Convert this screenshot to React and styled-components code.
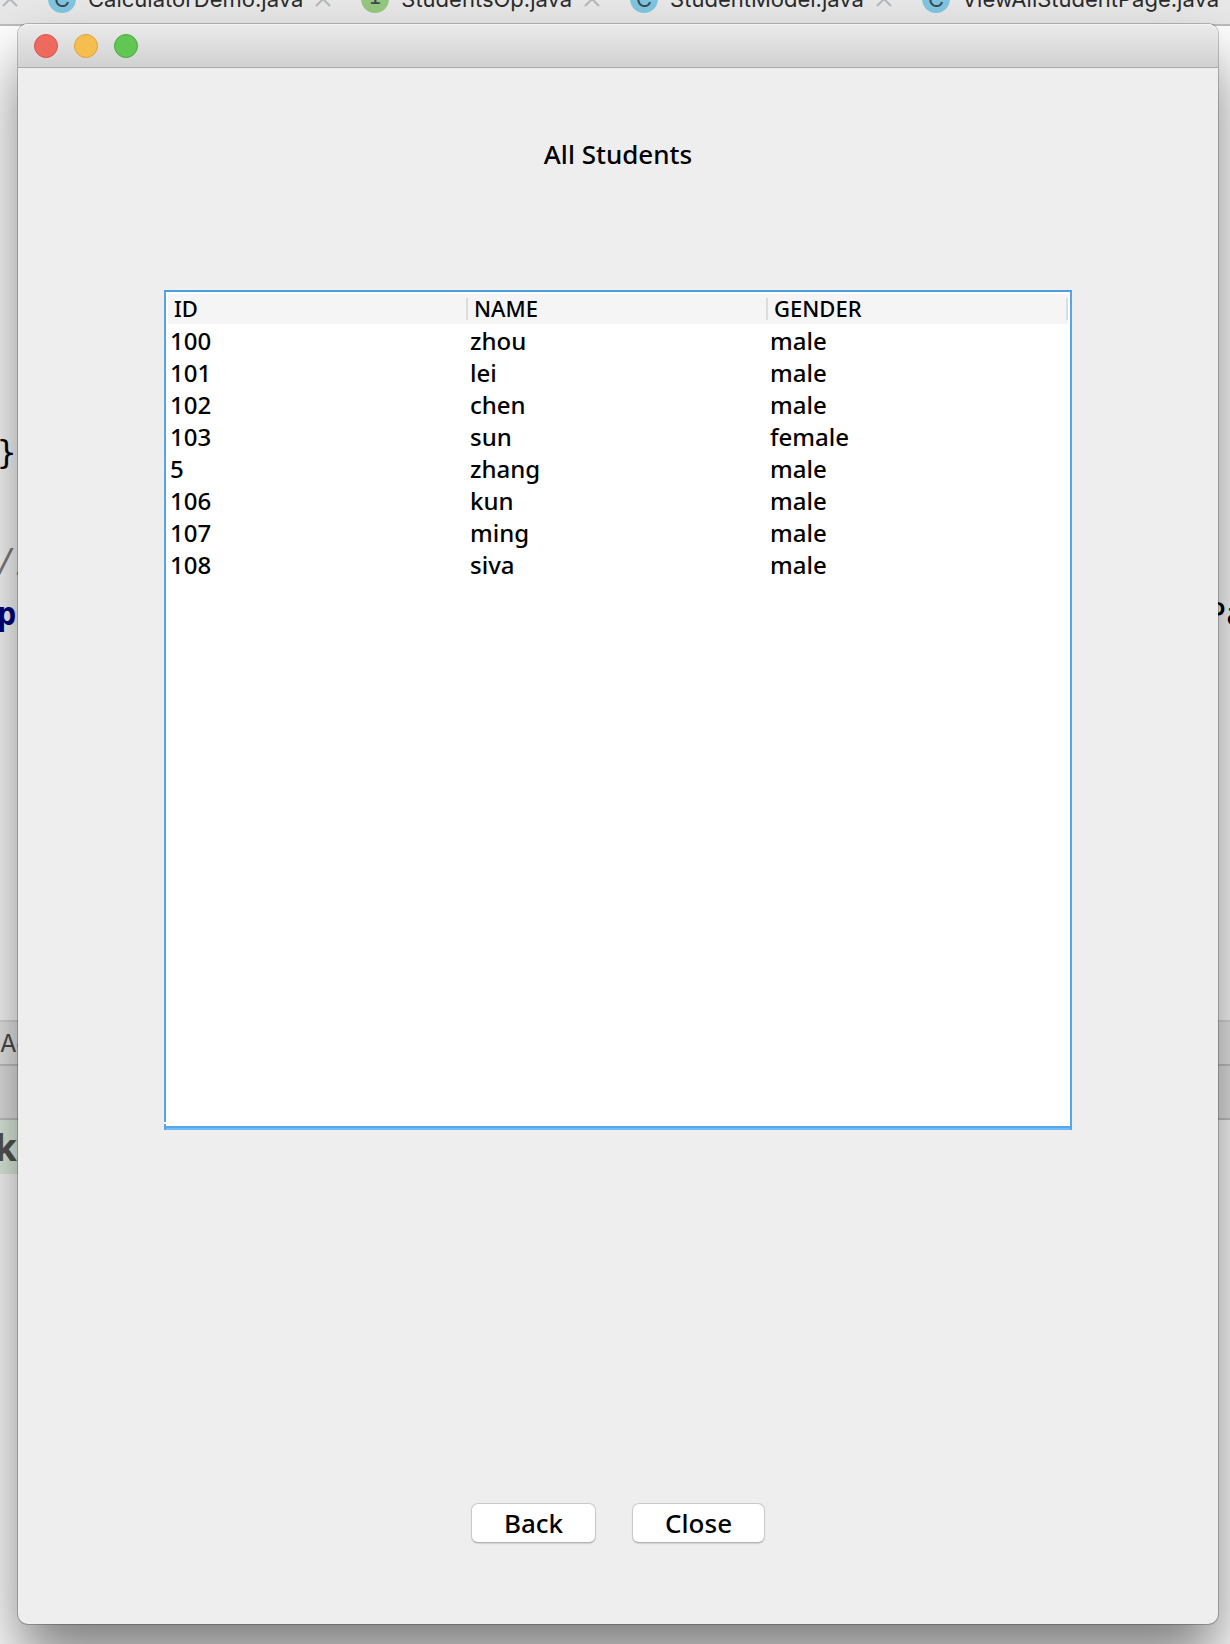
import React from "react";
import styled, { createGlobalStyle } from "styled-components";

const GlobalStyle = createGlobalStyle`
  *, *::before, *::after { box-sizing: border-box; }
  body { margin: 0; background: #fff; }
`;

const uiFont = `"Noto Sans", "Open Sans", sans-serif`;
const ideFont = `Inter, Roboto, sans-serif`;

const Desktop = styled.div`
  position: relative;
  min-height: 100vh;
  overflow: hidden;
  padding: 24px 12px 20px 18px;
  display: flex;
`;

/* The editor lies behind the dialog window. */
const Editor = styled.div`
  position: absolute;
  inset: 0;
  display: flex;
  flex-direction: column;
  overflow: hidden;
  font-family: ${ideFont};
`;

const TabBar = styled.nav`
  flex: none;
  height: 26px;
  display: flex;
  align-items: flex-end;
  overflow: hidden;
  padding: 0 0 11px 2px;
  background: #e8e8e8;
  border-bottom: 2px solid #bdbdbd;
`;

const Tab = styled.div`
  flex: none;
  display: flex;
  align-items: center;
  gap: 12px;
  height: 28px;
  margin-right: 30px;
`;

const FileBadge = styled.span`
  width: 28px;
  height: 28px;
  border-radius: 50%;
  background: ${(p) => (p.$kind === "I" ? "#95c880" : "#80c6e0")};
  color: #3c4a50;
  font: 22px/28px ${(p) => (p.$kind === "I" ? `"Liberation Mono", monospace` : ideFont)};
  text-align: center;
`;

const TabName = styled.span`
  font-size: 22px;
  line-height: 28px;
  color: #2b2b2b;
`;

const CloseMark = styled.svg`
  width: 16px;
  height: 16px;
`;

const Code = styled.div`
  flex: none;
  height: 994px;
  padding-top: 399px;
  font: 32px/54px "DejaVu Sans Mono", "Liberation Mono", monospace;
  color: #000;
`;

const CodeLine = styled.div`
  display: flex;
  justify-content: space-between;
  height: 54px;
  margin: 0 -15px 0 -3px;
`;

const Comment = styled.i`
  color: #808080;
`;

const Keyword = styled.b`
  color: #000080;
`;

const Strip = styled.div`
  flex: none;
  height: ${(p) => p.$height}px;
  background: ${(p) => p.$bg};
  border-top: 2px solid ${(p) => p.$line};
  font-size: 24px;
  line-height: 44px;
  color: #4c4c4c;
`;

const Console = styled.div`
  flex: none;
  height: 56px;
  margin-bottom: auto;
  border-top: 2px solid #c6c6c6;
  font-size: 38px;
  font-weight: 700;
  line-height: 54px;
  color: #555;
`;

const Highlight = styled.mark`
  display: inline-block;
  background: #e2f2e2;
  color: inherit;
  text-indent: -5px;
`;

const Window = styled.main`
  position: relative;
  flex: 1;
  display: flex;
  flex-direction: column;
  min-width: 0;
  border-radius: 10px;
  background: #eee;
  box-shadow: 0 0 0 1px rgba(0, 0, 0, 0.22), 0 36px 60px rgba(0, 0, 0, 0.5);
  font-family: ${uiFont};
  font-weight: 500;
  color: #000;
`;

const TitleBar = styled.header`
  flex: none;
  height: 44px;
  display: flex;
  align-items: center;
  gap: 16px;
  padding: 0 16px;
  border-radius: 10px 10px 0 0;
  border-bottom: 1px solid #ababab;
  background: linear-gradient(#ebebeb, #d1d1d1);
  box-shadow: inset 0 1px 0 #f6f6f6;
`;

const Light = styled.button`
  width: 24px;
  height: 24px;
  padding: 0;
  border: 1px solid ${(p) => p.$rim};
  border-radius: 50%;
  background: ${(p) => p.$fill};
`;

const Title = styled.h1`
  margin: 68px 0 118px;
  font-size: 26px;
  font-weight: inherit;
  line-height: 36px;
  text-align: center;
`;

const TablePane = styled.section`
  position: relative;
  min-height: 840px;
  margin: 0 146px;
  padding: 2px;
  border: 2px solid #57a6e8;
  border-top-color: #4b9ddf;
  border-bottom: 0;
  background: #fff;
  box-shadow: inset 0 -2px 0 #6cbbfd, inset 0 -4px 0 #57a6e8;

  /* Break in the focus ring above the bottom left corner. */
  &::after {
    content: "";
    position: absolute;
    left: -2px;
    bottom: 6px;
    width: 2px;
    height: 2px;
    background: #fff;
  }
`;

const Table = styled.table`
  width: 100%;
  table-layout: fixed;
  border-collapse: collapse;
`;

const HeadCell = styled.th`
  height: 30px;
  padding: 4px 0;
  background: #f5f5f5;
  font-weight: inherit;
  text-align: left;
  vertical-align: top;
`;

const HeadLabel = styled.span`
  display: block;
  height: 22px;
  padding-left: 6px;
  border-right: 2px solid #dcdcdc;
  font-size: 22px;
  line-height: 20px;
`;

const Cell = styled.td`
  height: 32px;
  padding: 2px 0 0 2px;
  font-size: 24px;
  line-height: 30px;
`;

const Actions = styled.footer`
  display: flex;
  justify-content: center;
  gap: 36px;
  margin: auto 0 81px;
`;

const Button = styled.button`
  height: 40px;
  padding: 0 32px;
  border: 1px solid #c9c9c9;
  border-bottom-color: #b2b2b2;
  border-radius: 7px;
  background: #fff;
  box-shadow: 0 1px 1px rgba(0, 0, 0, 0.12);
  font: 500 26px/36px ${uiFont};
  color: #000;
`;

const files = [
  { kind: "C", name: "CalculatorDemo.java" },
  { kind: "I", name: "StudentsOp.java" },
  { kind: "C", name: "StudentModel.java" },
  { kind: "C", name: "ViewAllStudentPage.java" },
];

const columns = ["ID", "NAME", "GENDER"];

const students = [
  ["100", "zhou", "male"],
  ["101", "lei", "male"],
  ["102", "chen", "male"],
  ["103", "sun", "female"],
  ["5", "zhang", "male"],
  ["106", "kun", "male"],
  ["107", "ming", "male"],
  ["108", "siva", "male"],
];

const lights = [
  { label: "Close window", fill: "#ee6a5f", rim: "#d9534b" },
  { label: "Minimize window", fill: "#f6be4f", rim: "#dfa33b" },
  { label: "Zoom window", fill: "#62c655", rim: "#4aa93c" },
];

const Cross = () => (
  <CloseMark viewBox="0 0 16 16" aria-hidden="true">
    <path d="M1 1L15 15M15 1L1 15" stroke="#b3b9bc" strokeWidth="2" fill="none" />
  </CloseMark>
);

export default function App() {
  return (
    <Desktop>
      <GlobalStyle />
      <Editor>
        <TabBar>
          <Tab>
            <Cross />
          </Tab>
          {files.map((f) => (
            <Tab key={f.name}>
              <FileBadge $kind={f.kind}>{f.kind}</FileBadge>
              <TabName>{f.name}</TabName>
              <Cross />
            </Tab>
          ))}
        </TabBar>
        <Code>
          <CodeLine>{"}"}</CodeLine>
          <CodeLine />
          <CodeLine>
            <Comment>//</Comment>
          </CodeLine>
          <CodeLine>
            <Keyword>p</Keyword>
            <span>Pa</span>
          </CodeLine>
        </Code>
        <Strip $height={44} $bg="#ececec" $line="#dcdcdc">
          Ac
        </Strip>
        <Strip $height={54} $bg="#e6e6e6" $line="#c6c6c6" />
        <Console>
          <Highlight>k&nbsp;</Highlight>
        </Console>
      </Editor>
      <Window>
        <TitleBar>
          {lights.map((l) => (
            <Light key={l.label} type="button" aria-label={l.label} $fill={l.fill} $rim={l.rim} />
          ))}
        </TitleBar>
        <Title>All Students</Title>
        <TablePane>
          <Table>
            <thead>
              <tr>
                {columns.map((c) => (
                  <HeadCell key={c} scope="col">
                    <HeadLabel>{c}</HeadLabel>
                  </HeadCell>
                ))}
              </tr>
            </thead>
            <tbody>
              {students.map((row) => (
                <tr key={row[0]}>
                  {row.map((value, i) => (
                    <Cell key={columns[i]}>{value}</Cell>
                  ))}
                </tr>
              ))}
            </tbody>
          </Table>
        </TablePane>
        <Actions>
          <Button type="button">Back</Button>
          <Button type="button">Close</Button>
        </Actions>
      </Window>
    </Desktop>
  );
}
